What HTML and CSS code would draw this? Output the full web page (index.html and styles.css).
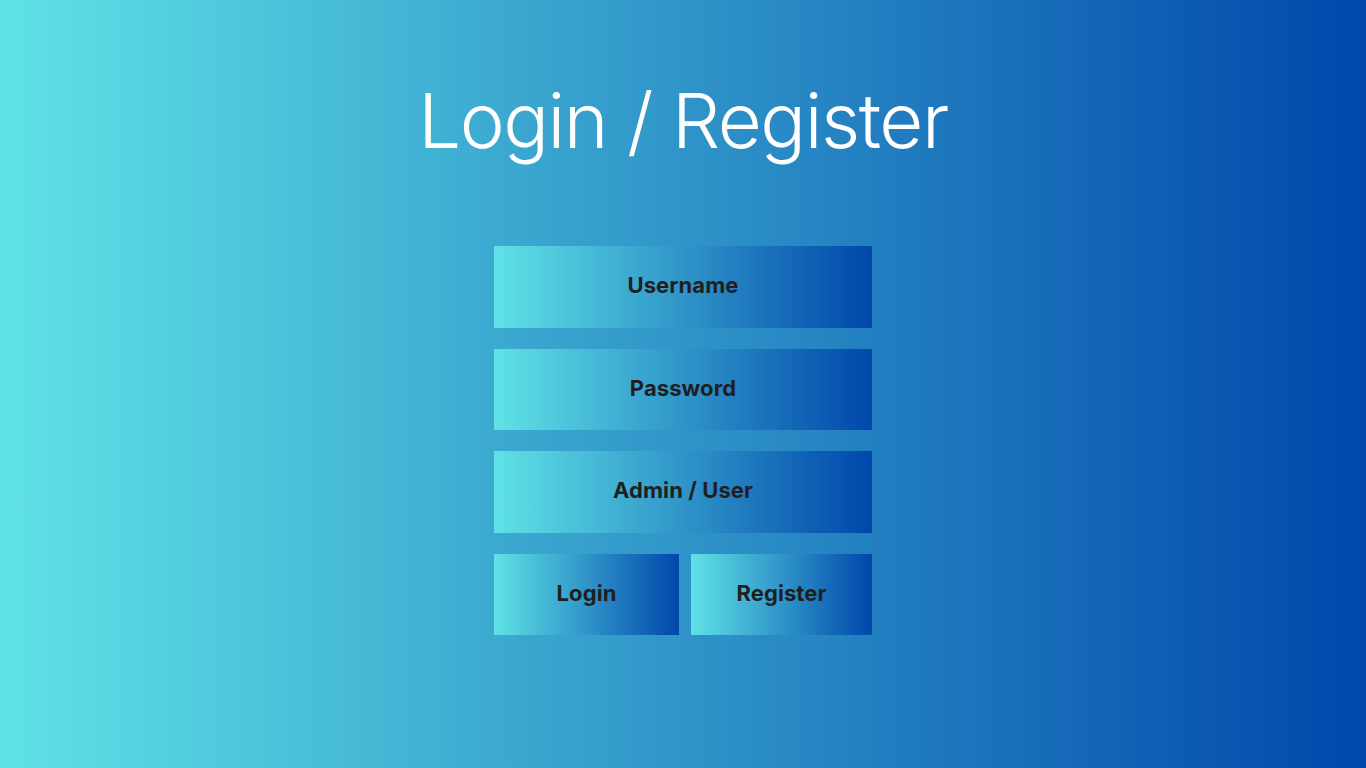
FILE: index.html
```html
<!DOCTYPE html>
<html lang="en">
<head>
<meta charset="utf-8">
<title>Login / Register</title>
<link rel="stylesheet" href="styles.css">
</head>
<body>
<main class="page">
  <h1 class="title">Login / Register</h1>
  <form class="form">
    <div class="field">Username</div>
    <div class="field">Password</div>
    <div class="field">Admin / User</div>
    <div class="actions">
      <button type="button" class="btn btn-login">Login</button>
      <button type="button" class="btn btn-register">Register</button>
    </div>
  </form>
</main>
</body>
</html>
```
FILE: styles.css
```css
html, body {
  margin: 0;
  padding: 0;
  height: 100%;
}
body {
  background: linear-gradient(to right, #5fe2e6, #0047ab);
  font-family: Inter, "Liberation Sans", sans-serif;
  overflow: hidden;
}
.page {
  display: flex;
  flex-direction: column;
  align-items: center;
}
.title {
  margin: 73px 0 0;
  font-size: 76px;
  font-weight: 300;
  color: #fff;
  line-height: 94px;
  letter-spacing: -1.45px;
}
.form {
  margin-top: 79px;
  width: 378px;
  display: flex;
  flex-direction: column;
  gap: 21px;
}
.field, .btn {
  height: 81.5px;
  padding: 0 0 3px;
  display: flex;
  align-items: center;
  justify-content: center;
  background: linear-gradient(to right, #5fe2e6, #0047ab);
  color: #1f1f1f;
  font-family: Inter, "Liberation Sans", sans-serif;
  font-weight: 700;
  font-size: 22px;
  letter-spacing: 0.1px;
  box-sizing: border-box;
}
.actions {
  display: flex;
  gap: 12px;
}
.btn {
  border: none;
  margin: 0;
}
.btn-login { width: 185px; }
.btn-register { width: 181px; }
```
